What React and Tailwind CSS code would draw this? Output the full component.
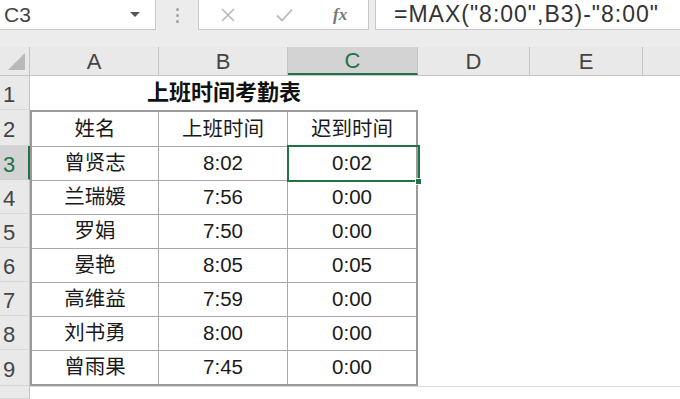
const cols = [
  { key: 'A', w: 'w-[129px]' },
  { key: 'B', w: 'w-[129px]' },
  { key: 'C', w: 'w-[130px]', active: true },
  { key: 'D', w: 'w-[112px]' },
  { key: 'E', w: 'w-[113px]' },
]

const rowHeads = [
  { n: 1, h: 'h-[34px]' },
  { n: 2, h: 'h-[36px]' },
  { n: 3, h: 'h-[34px]', active: true },
  { n: 4, h: 'h-[34px]' },
  { n: 5, h: 'h-[34px]' },
  { n: 6, h: 'h-[34px]' },
  { n: 7, h: 'h-[34px]' },
  { n: 8, h: 'h-[34px]' },
  { n: 9, h: 'h-[36px]' },
  { n: '', h: 'flex-1' },
]

const rows = [
  ['曾贤志', '8:02', '0:02'],
  ['兰瑞媛', '7:56', '0:00'],
  ['罗娟', '7:50', '0:00'],
  ['晏艳', '8:05', '0:05'],
  ['高维益', '7:59', '0:00'],
  ['刘书勇', '8:00', '0:00'],
  ['曾雨果', '7:45', '0:00'],
]

function FormulaBar() {
  return (
    <div className="flex h-[30px] shrink-0">
      <div className="flex w-[156px] items-center justify-between border-r border-b border-[#c8c8c8] bg-white pl-[4px] pr-[15px]">
        <span className="text-[21px] leading-none text-[#444]">C3</span>
        <span className="h-0 w-0 border-x-[5px] border-t-[5px] border-x-transparent border-t-[#555]" />
      </div>
      <div className="flex w-[42px] items-center justify-center">
        <div className="flex flex-col gap-[3px]">
          <span className="h-[3px] w-[3px] rounded-full bg-[#a0a0a0]" />
          <span className="h-[3px] w-[3px] rounded-full bg-[#a0a0a0]" />
          <span className="h-[3px] w-[3px] rounded-full bg-[#a0a0a0]" />
        </div>
      </div>
      <div className="flex w-[171px] items-center border-r border-b border-l border-[#c8c8c8] bg-white">
        <svg className="ml-[22px]" width="14" height="14" viewBox="0 0 14 14">
          <path d="M1 1 L13 13 M13 1 L1 13" stroke="#b8b8b8" strokeWidth="1.6" fill="none" />
        </svg>
        <svg className="ml-[41px]" width="17" height="14" viewBox="0 0 17 14">
          <path d="M1 7.5 L6 12.5 L16 1.5" stroke="#b8b8b8" strokeWidth="1.8" fill="none" />
        </svg>
        <span className="ml-[40px] text-[17px] font-bold italic leading-none text-[#777]" style={{ fontFamily: '"Liberation Serif", serif' }}>
          fx
        </span>
      </div>
      <div className="ml-[6px] flex flex-1 items-center border-b border-l border-[#c8c8c8] bg-white pl-[18px]">
        <span className="text-[23px] leading-none tracking-[1px] text-[#333]">=MAX("8:00",B3)-"8:00"</span>
      </div>
    </div>
  )
}

function ColumnHeaders() {
  return (
    <div className="flex h-[29px] shrink-0 border-b border-[#c4c4c4] bg-[#e9e9e9]">
      <div className="relative w-[30px] border-r border-[#c4c4c4]">
        <span className="absolute right-[4px] bottom-[5px] h-0 w-0 border-b-[17px] border-l-[17px] border-b-[#b9b9b9] border-l-transparent" />
      </div>
      {cols.map((c) => (
        <div
          key={c.key}
          className={
            c.active
              ? `${c.w} flex items-center justify-center border-r border-b-2 border-r-[#c4c4c4] border-b-[#217346] bg-[#d3d3d3] pt-[2px] text-[22px] leading-none text-[#217346]`
              : `${c.w} flex items-center justify-center border-r border-[#c4c4c4] pt-[1px] text-[22px] leading-none text-[#444]`
          }
        >
          {c.key}
        </div>
      ))}
      <div className="flex-1" />
    </div>
  )
}

function RowHeaders() {
  return (
    <div className="flex w-[30px] shrink-0 flex-col bg-[#e9e9e9]">
      {rowHeads.map((r, i) => (
        <div
          key={i}
          className={
            r.active
              ? `${r.h} flex items-center border-r-2 border-b border-r-[#217346] border-b-[#d0d0d0] bg-[#d3d3d3] pt-[5px] pl-[3px] text-[22px] leading-none text-[#217346]`
              : `${r.h} flex items-center border-r border-b border-r-[#c4c4c4] border-b-[#d6d6d6] pt-[5px] pl-[3px] text-[22px] leading-none text-[#444]`
          }
        >
          {r.n}
        </div>
      ))}
    </div>
  )
}

function Table() {
  return (
    <div className="w-[388px] border-2 border-[#9a9a9a] text-[20.5px] leading-none text-[#1a1a1a]">
      <div className="flex h-[34px]">
        <div className="flex w-[127px] items-center justify-center border-r border-[#a8a8a8]">姓名</div>
        <div className="flex w-[129px] items-center justify-center border-r border-[#a8a8a8]">上班时间</div>
        <div className="flex w-[128px] items-center justify-center">迟到时间</div>
      </div>
      {rows.map((r, i) => (
        <div key={i} className="flex h-[34px] border-t border-[#a8a8a8]">
          <div className="flex w-[127px] items-center justify-center border-r border-[#a8a8a8]">{r[0]}</div>
          <div className="flex w-[129px] items-center justify-center border-r border-[#a8a8a8]">{r[1]}</div>
          <div className="relative flex w-[128px] items-center justify-center">
            {r[2]}
            {i === 0 && (
              <>
                <div className="absolute -top-[2px] -left-[1px] -right-[4px] -bottom-[2px] border-2 border-[#217346]" />
                <div className="absolute -right-[6px] -bottom-[5px] h-[7px] w-[7px] border border-white bg-[#217346]" />
              </>
            )}
          </div>
        </div>
      ))}
    </div>
  )
}

export default function App() {
  return (
    <div
      className="flex h-[399px] w-[680px] flex-col overflow-hidden bg-[#ececec]"
      style={{ fontFamily: '"Liberation Sans", "Noto Sans CJK SC", sans-serif' }}
    >
      <FormulaBar />
      <div className="h-[17px] shrink-0" />
      <ColumnHeaders />
      <div className="flex flex-1">
        <RowHeaders />
        <div className="flex flex-1 flex-col bg-white">
          <div className="flex h-[34px] w-[388px] items-center justify-center text-[22px] font-bold leading-none text-[#111]">
            上班时间考勤表
          </div>
          <Table />
          <div className="flex-1 border-t border-[#d8d8d8]" />
        </div>
      </div>
    </div>
  )
}
